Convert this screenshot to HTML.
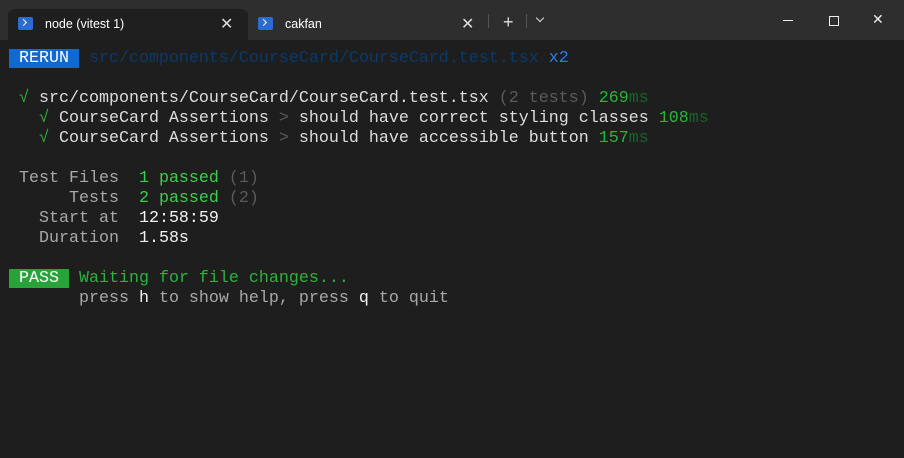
<!DOCTYPE html>
<html><head><style>
body{margin:0;width:904px;height:458px;background:#1e1e1e;overflow:hidden;font-family:"Liberation Sans",sans-serif;position:relative}
.tb{position:absolute;left:0;top:0;width:904px;height:40px;background:#2e2e2e}
.tab{position:absolute;top:9px;height:31px;font-size:12.5px;color:#fff}
.t1{left:8px;width:240px;background:#1f1f1f;border-radius:7px 7px 0 0}
.ico{position:absolute;left:10px;top:8px;width:15px;height:13px;background:#2d6bd1;border-radius:2px}
.ico:after{content:"";position:absolute;left:3px;top:3px;width:4px;height:4px;border-right:1.5px solid #fff;border-bottom:1.5px solid #fff;transform:rotate(-45deg)}
.lbl{position:absolute;left:37px;top:8px}
.x{position:absolute;top:5px;font-size:16px;color:#ddd}
.term{position:absolute;left:9px;top:49px;font-family:"Liberation Mono",monospace;font-size:16.67px;line-height:20px;color:#ddd;white-space:pre}
.g{color:#2cb33c}.G{color:#3ccf4d}.d{color:#5a5a5a}.dg{color:#17622a}.w{color:#f2f2f2}.gr{color:#a8a8a8}
</style></head><body>
<div class="tb">
<div class="tab t1"><div class="ico"></div><span class="lbl">node (vitest 1)</span><span class="x" style="left:212px">✕</span></div>
<div class="tab" style="left:248px;width:230px"><div class="ico"></div><span class="lbl">cakfan</span><span class="x" style="left:213px">✕</span></div>
<div style="position:absolute;left:488px;top:14px;width:1px;height:14px;background:#555"></div>
<div style="position:absolute;left:503px;top:12px;color:#ddd;font-size:18px">+</div>
<div style="position:absolute;left:526px;top:14px;width:1px;height:14px;background:#555"></div>
<div style="position:absolute;left:537px;top:15px;width:5px;height:5px;border-right:1px solid #ddd;border-bottom:1px solid #ddd;transform:rotate(45deg)"></div>
<div style="position:absolute;left:783px;top:20px;width:10px;height:1px;background:#eee"></div>
<div style="position:absolute;left:829px;top:16px;width:8px;height:8px;border:1px solid #eee"></div>
<div style="position:absolute;left:872px;top:11px;color:#eee;font-size:14px">✕</div>
</div>
<div class="term"><span style="background:#0e6ad0;color:#fff"> RERUN </span> <span style="color:#0b3a68">src/components/CourseCard/CourseCard.test.tsx</span> <span style="color:#2a7fd6">x2</span>

<span class="g"> √</span> src/components/CourseCard/CourseCard.test.tsx <span class="d">(2 tests)</span> <span class="g">269</span><span class="dg">ms</span>
<span class="g">   √</span> CourseCard Assertions <span class="d">&gt;</span> should have correct styling classes <span class="g">108</span><span class="dg">ms</span>
<span class="g">   √</span> CourseCard Assertions <span class="d">&gt;</span> should have accessible button <span class="g">157</span><span class="dg">ms</span>

<span class="gr"> Test Files</span>  <span class="G">1 passed</span> <span class="d">(1)</span>
<span class="gr">      Tests</span>  <span class="G">2 passed</span> <span class="d">(2)</span>
<span class="gr">   Start at</span>  <span class="w">12:58:59</span>
<span class="gr">   Duration</span>  <span class="w">1.58s</span>

<span style="background:#27a33a;color:#fff"> PASS </span> <span class="g">Waiting for file changes...</span>
       <span class="gr">press <span class="w">h</span> to show help, press <span class="w">q</span> to quit</span></div>
</body></html>
